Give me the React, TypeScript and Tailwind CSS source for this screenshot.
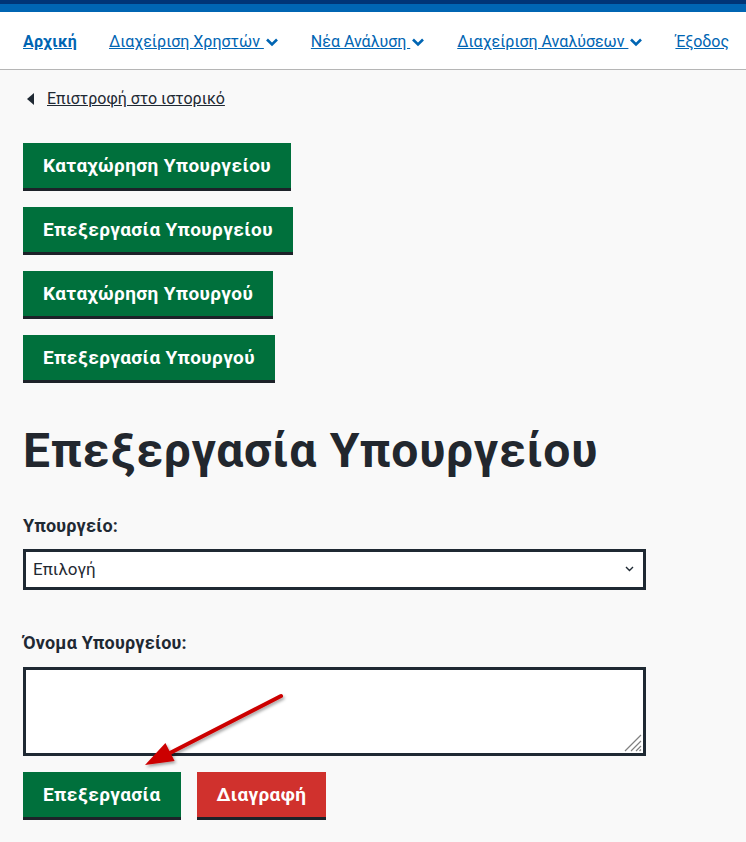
import React from 'react'

const font = { fontFamily: 'Roboto, "Noto Sans", sans-serif' }

const Chevron = () => (
  <svg width="14" height="10" viewBox="0 0 14 10" className="inline-block ml-[1px] -mt-0.5">
    <path d="M2 2.5 L7 7.5 L12 2.5" fill="none" stroke="currentColor" strokeWidth="2.6" />
  </svg>
)

const NavLink: React.FC<{ label: string; bold?: boolean; menu?: boolean }> = ({ label, bold, menu }) => (
  <a
    className={`text-[#0065b3] text-[16px] underline whitespace-nowrap ${bold ? 'font-bold tracking-[0.3px]' : ''}`}
    href="#"
  >
    {label}
    {menu && <Chevron />}
  </a>
)

const ActionButton: React.FC<{ label: string; red?: boolean }> = ({ label, red }) => (
  <button
    className={`self-start text-white font-bold text-[19px] leading-[21px] px-5 py-3 border-b-[3px] border-[#1d2229] tracking-[0.4px] ${
      red ? 'bg-[#d0312d]' : 'bg-[#00703c]'
    }`}
  >
    {label}
  </button>
)

const App: React.FC = () => {
  return (
    <div className="relative h-[842px] overflow-hidden bg-[#f9f9f9] text-[#1f2933]" style={font}>
      {/* top stripes */}
      <div className="h-[4px] bg-[#003476]" />
      <div className="h-[8px] bg-[#0065b3]" />

      {/* nav */}
      <div className="bg-white h-[58px] border-b border-[#b5b5b5] flex items-center px-[23px] gap-8 pt-[3px]">
        <NavLink label="Αρχική" bold />
        <NavLink label="Διαχείριση Χρηστών " menu />
        <NavLink label="Νέα Ανάλυση " menu />
        <NavLink label="Διαχείριση Αναλύσεων " menu />
        <NavLink label="Έξοδος" />
      </div>

      <div className="px-[23px]">
        {/* back link */}
        <div className="flex items-center gap-[13px] mt-[19px] ml-[4px]">
          <svg width="7" height="12" viewBox="0 0 7 12">
            <path d="M7 0 L0 6 L7 12 Z" fill="#1f2933" />
          </svg>
          <a href="#" className="underline text-[16px] leading-[20px] text-[#1f2933]">Επιστροφή στο ιστορικό</a>
        </div>

        <div className="flex flex-col gap-4 mt-[34px]">
          <ActionButton label="Καταχώρηση Υπουργείου" />
          <ActionButton label="Επεξεργασία Υπουργείου" />
          <ActionButton label="Καταχώρηση Υπουργού" />
          <ActionButton label="Επεξεργασία Υπουργού" />
        </div>

        <h1 className="text-[48px] font-bold leading-[56px] mt-[40px] text-[#22272e] tracking-[0.75px]">
          Επεξεργασία Υπουργείου
        </h1>

        <div className="mt-[37px] w-[623px]">
          <label className="block font-bold text-[18px] leading-[20px] tracking-[0.2px] mb-[13px]">Υπουργείο:</label>
          <div className="relative h-[41px] bg-white border-[3px] border-[#1f2933] flex items-center px-[7px]">
            <span className="text-[17px]">Επιλογή</span>
            <svg className="absolute right-[9px] top-[14px]" width="9" height="6" viewBox="0 0 9 6">
              <path d="M1 1 L4.5 4.5 L8 1" fill="none" stroke="#1f2933" strokeWidth="1.4" />
            </svg>
          </div>

          <label className="block font-bold text-[18px] leading-[20px] tracking-[0.2px] mt-[43px] mb-[14px]">Όνομα Υπουργείου:</label>
          <div className="relative h-[89px] bg-white border-[3px] border-[#1f2933]">
            <svg className="absolute right-[1px] bottom-[1px]" width="18" height="18" viewBox="0 0 18 18">
              <path d="M17 1 L1 17 M17 7 L7 17 M17 12 L12 17 M17 15.5 L15.5 17" stroke="#808080" strokeWidth="1.2" />
            </svg>
          </div>
        </div>

        <div className="flex gap-4 mt-[16px]">
          <ActionButton label="Επεξεργασία" />
          <ActionButton label="Διαγραφή" red />
        </div>
      </div>

      {/* annotation arrow */}
      <svg className="absolute left-0 top-0 pointer-events-none" width="746" height="842">
        <defs>
          <filter id="sh" x="-20%" y="-20%" width="140%" height="140%">
            <feDropShadow dx="1.5" dy="2" stdDeviation="1.5" floodColor="#000" floodOpacity="0.35" />
          </filter>
        </defs>
        <g filter="url(#sh)">
          <line x1="281" y1="696" x2="168" y2="754" stroke="#cc0000" strokeWidth="4" strokeLinecap="round" />
          <path d="M145 765 L165.4 743.1 L174.6 760.9 Z" fill="#cc0000" />
        </g>
      </svg>
    </div>
  )
}

export default App
